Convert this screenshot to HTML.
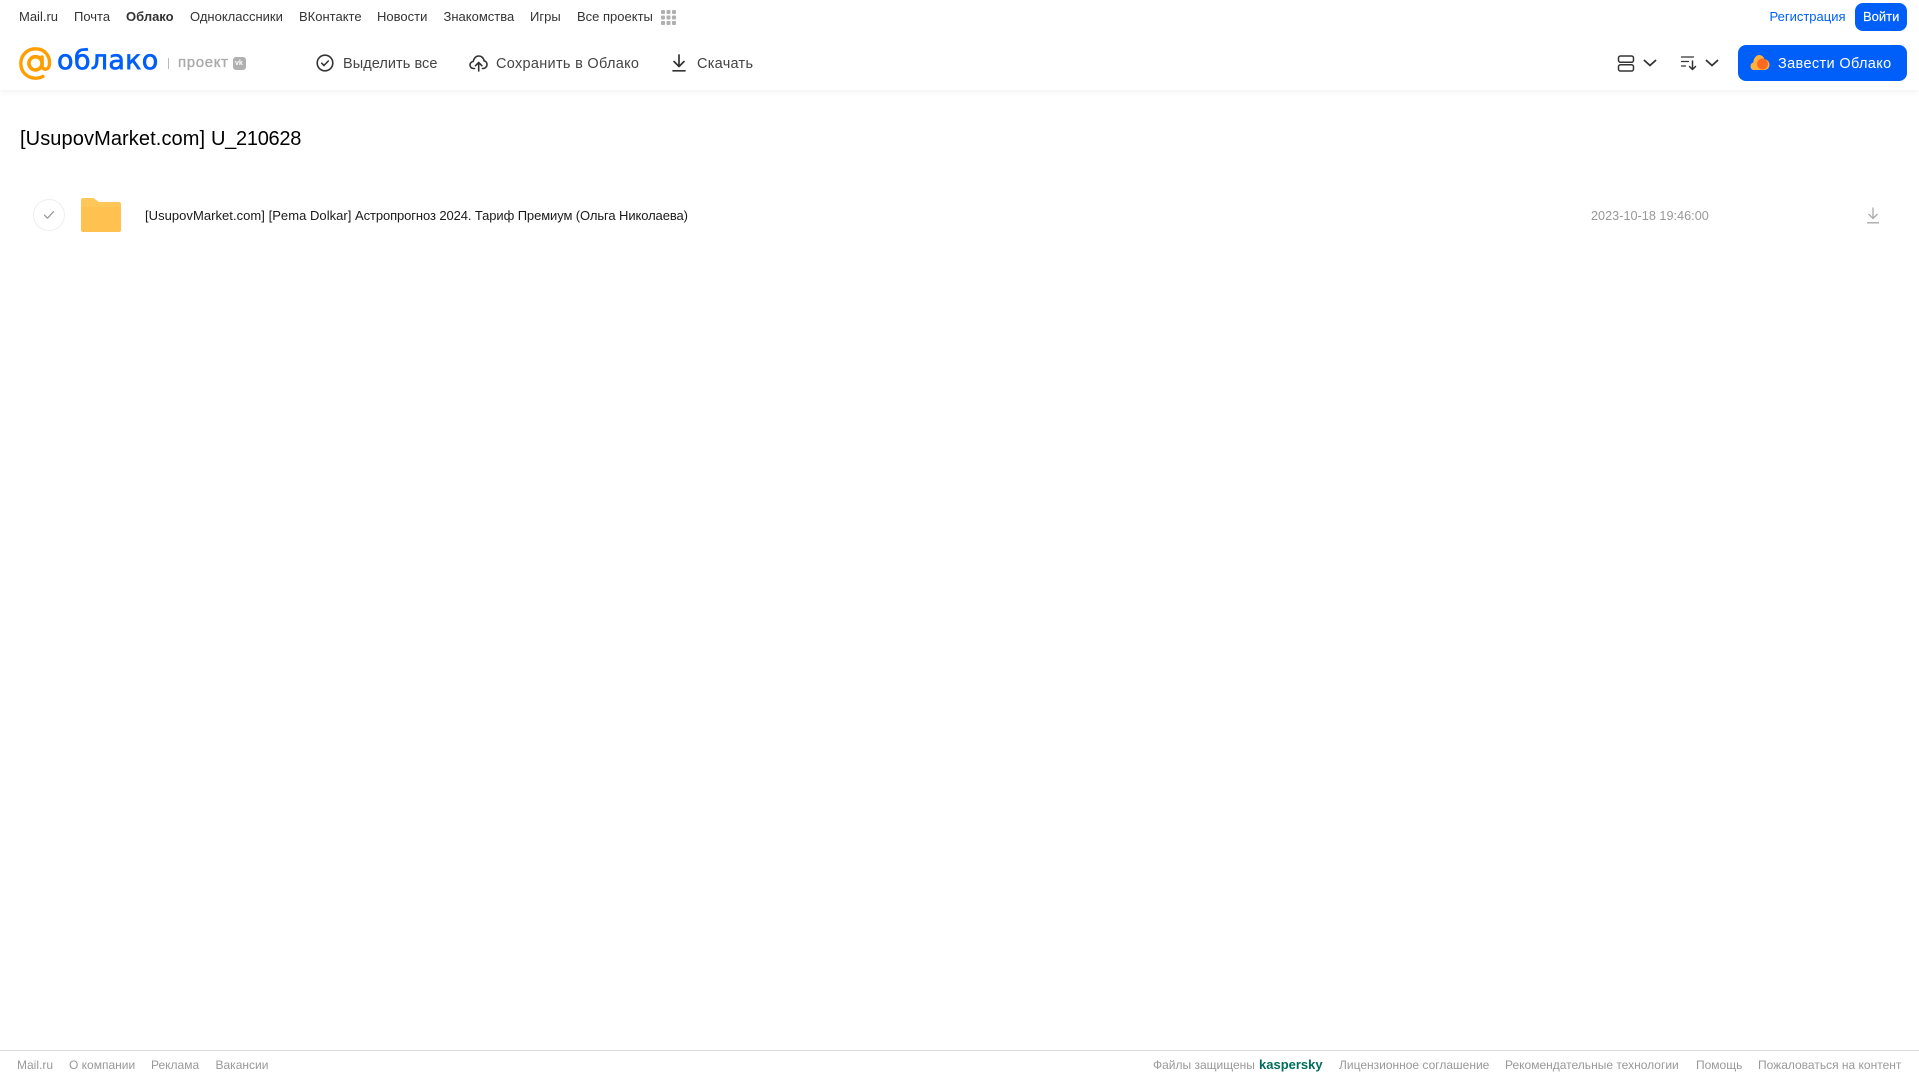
<!DOCTYPE html>
<html lang="ru"><head><meta charset="utf-8"><title>Облако</title>
<style>
html,body{margin:0;padding:0;background:#fff;width:1919px;height:1079px;overflow:hidden}
body{position:relative;font-family:"Liberation Sans",Arial,sans-serif}
.t{position:absolute;white-space:nowrap;display:block}
.n{top:8px;line-height:17px;font-size:13px;color:#333}
.a{top:55px;line-height:18px;font-size:14.5px;color:#444}
.f{top:1057px;line-height:16px;font-size:12px;color:#999}
svg{position:absolute;display:block}
#hdr{position:absolute;left:0;top:0;width:1919px;height:90px;background:#fff;box-shadow:0 1px 6px rgba(0,0,0,.07)}
</style></head><body>
<div id="hdr"></div>
<span class="t n" style="left:19px">Mail.ru</span>
<span class="t n" style="left:74px">Почта</span>
<span class="t n" style="left:126px;font-weight:700">Облако</span>
<span class="t n" style="left:190px">Одноклассники</span>
<span class="t n" style="left:299px">ВКонтакте</span>
<span class="t n" style="left:377px">Новости</span>
<span class="t n" style="left:443.5px">Знакомства</span>
<span class="t n" style="left:530px">Игры</span>
<span class="t n" style="left:577px">Все проекты</span>
<svg style="left:661px;top:10px" width="15" height="15" fill="#b0b0b0"><rect x="0" y="0" width="4" height="4" rx="1"/><rect x="5.5" y="0" width="4" height="4" rx="1"/><rect x="11" y="0" width="4" height="4" rx="1"/><rect x="0" y="5.5" width="4" height="4" rx="1"/><rect x="5.5" y="5.5" width="4" height="4" rx="1"/><rect x="11" y="5.5" width="4" height="4" rx="1"/><rect x="0" y="11" width="4" height="4" rx="1"/><rect x="5.5" y="11" width="4" height="4" rx="1"/><rect x="11" y="11" width="4" height="4" rx="1"/></svg>

<span class="t n" style="left:1769.5px;color:#005ff9">Регистрация</span>
<div style="position:absolute;left:1855px;top:3px;width:52px;height:28px;border-radius:8px;background:#005ff9"></div>
<span class="t n" style="left:1863px;color:#fff;-webkit-text-stroke:.15px #fff">Войти</span>

<svg style="left:19px;top:47px" width="33" height="33" viewBox="0 0 33 33" fill="none"><circle cx="16.5" cy="16.3" r="6.6" stroke="#ff9e00" stroke-width="3.6"/><path d="M23.1 10v8.2c0 2.6 1.6 4 3.4 4 2 0 3.8-1.800 4-5.400C31 8 25 1.800 16.500 1.800 8.200 1.800 1.800 8.200 1.800 16.500c0 8.300 6.400 14.700 14.700 14.700 2.800 0 5.200-.6 7.400-1.800" stroke="#ff9e00" stroke-width="3.4" stroke-linecap="round"/></svg>
<span class="t" style="left:57px;top:42px;line-height:38px;font-family:'DejaVu Sans',sans-serif;font-size:27px;color:#005ff9;-webkit-text-stroke:.7px #005ff9;letter-spacing:.3px">облако</span>
<div style="position:absolute;left:168px;top:58px;width:1px;height:11px;background:#bbb"></div>
<span class="t" style="left:178px;top:54px;line-height:18px;font-size:15px;color:#aaa;-webkit-text-stroke:.35px #aaa;letter-spacing:.65px">проект</span>
<div style="position:absolute;left:233px;top:57px;width:13px;height:13px;border-radius:3px;background:#b0b0b0"></div>
<span class="t" style="left:235px;top:58px;line-height:11px;font-size:7px;font-weight:700;color:#fff">vk</span>

<svg style="left:316px;top:54px" width="18" height="18" fill="none" stroke="#333" stroke-width="1.600"><circle cx="9" cy="9" r="7.800"/><path d="M5.700 9.200l2.300 2.300 4.300-4.500" stroke-linecap="round" stroke-linejoin="round"/></svg>
<span class="t a" style="left:343px;letter-spacing:.06px">Выделить все</span>
<svg style="left:469px;top:54px" width="19" height="18" fill="none" stroke="#333" stroke-width="1.600" stroke-linecap="round" stroke-linejoin="round"><path d="M5.500 14.500H4.500C2.500 14.500 1 13 1 11c0-1.900 1.400-3.400 3.200-3.500C4.700 4.200 7 2 9.700 2c2.800 0 5 2 5.300 4.800 1.700.3 3 1.800 3 3.700 0 2.200-1.800 4-4 4h-.5"/><path d="M9.700 17V9M6.500 11.700l3.200-3.200 3.200 3.200"/></svg>
<span class="t a" style="left:496px;letter-spacing:.3px">Сохранить в Облако</span>
<svg style="left:671px;top:54px" width="16" height="18" fill="none" stroke="#333" stroke-width="1.700" stroke-linecap="round" stroke-linejoin="round"><path d="M8 1v11M3 7.500l5 5 5-5M2 16.800h12"/></svg>
<span class="t a" style="left:697px;letter-spacing:.27px">Скачать</span>

<svg style="left:1617px;top:55px" width="18" height="17" fill="none" stroke="#333" stroke-width="1.500"><rect x="1.500" y="1" width="15" height="6.300" rx="2"/><rect x="1.500" y="9.700" width="15" height="6.300" rx="2"/></svg>
<svg style="left:1643px;top:59px" width="14" height="8" fill="none" stroke="#333" stroke-width="1.800" stroke-linecap="round" stroke-linejoin="round"><path d="M1.500 1.500l5.500 5 5.500-5"/></svg>
<svg style="left:1680px;top:55px" width="18" height="16" fill="none" stroke="#333" stroke-width="1.300" stroke-linecap="round" stroke-linejoin="round"><path d="M1.500 2h12M1.500 6.500h7M1.500 11h4"/><path d="M12.500 6v8.500M9.500 11.500l3 3 3-3" stroke-width="1.500"/></svg>
<svg style="left:1705px;top:59px" width="14" height="8" fill="none" stroke="#333" stroke-width="1.800" stroke-linecap="round" stroke-linejoin="round"><path d="M1.500 1.500l5.500 5 5.500-5"/></svg>

<div style="position:absolute;left:1738px;top:45px;width:169px;height:36px;border-radius:8px;background:#005ff9"></div>
<svg style="left:1750px;top:54px" width="20" height="17" viewBox="0 0 20 17"><path d="M4 16C1.800 16 .5 14.300.5 12.200c0-1.900 1.200-3.300 2.800-3.700C3.600 4 6.300 1 9.200 1c2.600 0 4.600 1.800 5.100 4.200C17.300 5.300 19.500 7.800 19.500 10.800 19.500 13.800 17.300 16 14.500 16z" fill="#ffb13d"/><circle cx="12.500" cy="10" r="5.500" fill="#ff6a1f"/></svg>
<span class="t a" style="left:1778px;color:#fff;letter-spacing:.36px">Завести Облако</span>

<span class="t" style="left:20px;top:126px;line-height:26px;font-size:20px;color:#000;letter-spacing:.1px">[UsupovMarket.com]</span>
<span class="t" style="left:211px;top:126px;line-height:26px;font-size:20px;color:#000;letter-spacing:-.28px">U_210628</span>

<div style="position:absolute;left:33px;top:199px;width:30px;height:30px;border:1px solid #eee;border-radius:50%"></div>
<svg style="left:43px;top:210px" width="12" height="10" fill="none" stroke="#999" stroke-width="1.300" stroke-linecap="round" stroke-linejoin="round"><path d="M1.500 5.200l3 3 6-6.500"/></svg>
<svg style="left:81px;top:198px" width="40" height="34" viewBox="0 0 40 34"><path d="M2 0h9c1.500 0 2.500.5 3.500 1.500L18 4h20c1.100 0 2 .9 2 2v26c0 1.100-.9 2-2 2H2c-1.100 0-2-.9-2-2V2C0 .9.900 0 2 0z" fill="#ffc75a"/><path d="M0 9h40v23c0 1.100-.9 2-2 2H2c-1.100 0-2-.9-2-2z" fill="#ffc250"/></svg>
<span class="t" style="left:145px;top:207px;line-height:17px;font-size:13px;color:#1a1a1a;letter-spacing:.04px">[UsupovMarket.com] [Pema Dolkar]</span>
<span class="t" style="left:355px;top:207px;line-height:17px;font-size:13px;color:#1a1a1a;letter-spacing:-.1px">Астропрогноз 2024. Тариф Премиум (Ольга Николаева)</span>
<span class="t" style="left:1591px;top:208px;line-height:17px;font-size:12.700px;color:#999">2023-10-18 19:46:00</span>
<svg style="left:1866px;top:206px" width="14" height="18" fill="none" stroke="#aaa" stroke-width="1.300"><path d="M7 1.500v11M2.500 8l4.500 4.500L11.500 8M1 16.800h12"/></svg>

<div style="position:absolute;left:0;top:1050px;width:1919px;height:1px;background:#ddd"></div>
<span class="t f" style="left:17px">Mail.ru</span>
<span class="t f" style="left:69px">О компании</span>
<span class="t f" style="left:151px">Реклама</span>
<span class="t f" style="left:215.500px">Вакансии</span>
<span class="t f" style="left:1153px">Файлы защищены</span>
<span class="t f" style="left:1259px;color:#006d5c;font-weight:700;font-size:13px">kaspersky</span>
<span class="t f" style="left:1339px">Лицензионное соглашение</span>
<span class="t f" style="left:1505px">Рекомендательные технологии</span>
<span class="t f" style="left:1696px">Помощь</span>
<span class="t f" style="left:1758px">Пожаловаться на контент</span>
</body></html>
